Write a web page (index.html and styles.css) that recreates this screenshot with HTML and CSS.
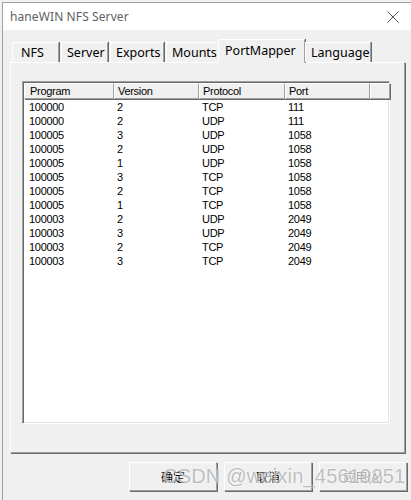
FILE: index.html
```html
<!DOCTYPE html>
<html>
<head>
<meta charset="utf-8">
<link rel="stylesheet" href="styles.css">
</head>
<body>
<div class="window">
  <div class="titlebar">
    <span class="title">haneWIN NFS Server</span>
    <svg class="close" width="12" height="12" viewBox="0 0 12 12"><path d="M0.5 0.5 L11.5 11.5 M11.5 0.5 L0.5 11.5" stroke="#555" stroke-width="1" fill="none"/></svg>
  </div>
  <div class="content">
    <div class="tabs">
      <div class="tab t-nfs">NFS</div>
      <div class="tab t-server">Server</div>
      <div class="tab t-exports">Exports</div>
      <div class="tab t-mounts">Mounts</div>
      <div class="tab active t-pm">PortMapper</div>
      <div class="tab t-lang">Language</div>
    </div>
    <div class="panel">
      <div class="listview">
        <div class="header">
          <div class="hcell c1">Program</div>
          <div class="hcell c2">Version</div>
          <div class="hcell c3">Protocol</div>
          <div class="hcell c4">Port</div>
          <div class="hcell c5"></div>
        </div>
        <div class="rows">
          <div class="row"><span class="c1">100000</span><span class="c2">2</span><span class="c3">TCP</span><span class="c4">111</span></div>
          <div class="row"><span class="c1">100000</span><span class="c2">2</span><span class="c3">UDP</span><span class="c4">111</span></div>
          <div class="row"><span class="c1">100005</span><span class="c2">3</span><span class="c3">UDP</span><span class="c4">1058</span></div>
          <div class="row"><span class="c1">100005</span><span class="c2">2</span><span class="c3">UDP</span><span class="c4">1058</span></div>
          <div class="row"><span class="c1">100005</span><span class="c2">1</span><span class="c3">UDP</span><span class="c4">1058</span></div>
          <div class="row"><span class="c1">100005</span><span class="c2">3</span><span class="c3">TCP</span><span class="c4">1058</span></div>
          <div class="row"><span class="c1">100005</span><span class="c2">2</span><span class="c3">TCP</span><span class="c4">1058</span></div>
          <div class="row"><span class="c1">100005</span><span class="c2">1</span><span class="c3">TCP</span><span class="c4">1058</span></div>
          <div class="row"><span class="c1">100003</span><span class="c2">2</span><span class="c3">UDP</span><span class="c4">2049</span></div>
          <div class="row"><span class="c1">100003</span><span class="c2">3</span><span class="c3">UDP</span><span class="c4">2049</span></div>
          <div class="row"><span class="c1">100003</span><span class="c2">2</span><span class="c3">TCP</span><span class="c4">2049</span></div>
          <div class="row"><span class="c1">100003</span><span class="c2">3</span><span class="c3">TCP</span><span class="c4">2049</span></div>
        </div>
      </div>
    </div>
    <div class="buttons">
      <div class="btn">确定</div>
      <div class="btn">取消</div>
      <div class="btn disabled">应用(A)</div>
    </div>
  </div>
  <div class="watermark">CSDN @weixin_45619251</div>
</div>
</body>
</html>
```
FILE: styles.css
```css
html, body {
  margin: 0;
  padding: 0;
  background: #f0f0f0;
}
body {
  width: 411px;
  height: 500px;
  overflow: hidden;
  position: relative;
}
.window {
  position: relative;
  margin: 2px 0 0 2px;
  width: 409px;
  height: 498px;
  border-top: 1px solid #a0a0a0;
  border-left: 1px solid #a0a0a0;
  box-sizing: border-box;
  background: #f0f0f0;
  overflow: hidden;
}
.titlebar {
  height: 27px;
  background: #ffffff;
  display: flex;
  align-items: center;
  justify-content: space-between;
  padding: 0 12px 0 7px;
}
.title {
  font-family: "Noto Sans", "Noto Sans CJK SC", sans-serif;
  font-size: 12px;
  color: #5f5f5f;
  letter-spacing: 0.1px;
}
.close {
  display: block;
}
.content {
  padding: 8px 0 0 7px;
}
.tabs {
  display: flex;
  align-items: flex-end;
  height: 24px;
  padding-left: 2px;
  position: relative;
  z-index: 2;
}
.tab {
  height: 20px;
  box-sizing: border-box;
  border-top: 1px solid #ffffff;
  border-left: 1px solid #ffffff;
  border-right: 1px solid #a0a0a0;
  box-shadow: 1px 0 0 #696969;
  margin-right: 2px;
  font-family: "Noto Sans", sans-serif;
  font-size: 12.5px;
  color: #000;
  line-height: 19px;
  padding: 0 5px;
  background: #f0f0f0;
}
.t-nfs { width: 47px; padding-left: 8px; }
.t-server { width: 47px; }
.t-exports { width: 54px; }
.t-mounts { width: 53px; margin-right: 0; }
.tab.active {
  height: 24px;
  width: 87px;
  margin-left: -1px;
  margin-right: 0;
  padding-left: 6px;
  line-height: 21px;
  border-bottom: 1px solid #f0f0f0;
  margin-bottom: -1px;
}
.t-lang { width: 66px; }
.panel {
  width: 395px;
  height: 391px;
  box-sizing: border-box;
  border-top: 1px solid #ffffff;
  border-left: 1px solid #ffffff;
  border-right: 1px solid #a0a0a0;
  border-bottom: 1px solid #a0a0a0;
  box-shadow: 1px 1px 0 #696969;
  padding: 18px 14px 0 11px;
  position: relative;
  z-index: 1;
}
.listview {
  width: 368px;
  height: 343px;
  box-sizing: border-box;
  border-top: 1px solid #a0a0a0;
  border-left: 1px solid #a0a0a0;
  border-right: 1px solid #ffffff;
  border-bottom: 1px solid #ffffff;
  box-shadow: inset 1px 1px 0 #696969, inset -1px -1px 0 #e3e3e3;
  background: #ffffff;
  padding: 1px 0 0 1px;
  font-family: "Liberation Sans", Arial, sans-serif;
  font-size: 11px;
  letter-spacing: -0.3px;
  color: #000;
}
.header {
  display: grid;
  grid-template-columns: 90px 85px 86px 85px 20px;
  height: 16px;
}
.hcell {
  box-sizing: border-box;
  height: 16px;
  background: #f0f0f0;
  border-top: 1px solid #ffffff;
  border-left: 1px solid #ffffff;
  border-right: 1px solid #a0a0a0;
  border-bottom: 1px solid #a0a0a0;
  box-shadow: 1px 1px 0 #696969;
  line-height: 14px;
  padding-left: 5px;
}
.hcell.c2, .hcell.c3, .hcell.c4 { padding-left: 3px; }
.rows {
  margin-top: 1px;
}
.row {
  display: grid;
  grid-template-columns: 90px 85px 86px 85px;
  height: 14px;
  line-height: 14px;
}
.row span { padding-left: 5px; }
.row .c2, .row .c3, .row .c4 { padding-left: 3px; }
.buttons {
  display: flex;
  gap: 7px;
  padding: 9px 0 0 119px;
}
.btn {
  width: 88px;
  height: 29px;
  box-sizing: border-box;
  border-top: 1px solid #ffffff;
  border-left: 1px solid #ffffff;
  border-right: 1px solid #a0a0a0;
  border-bottom: 1px solid #a0a0a0;
  box-shadow: 1px 1px 0 #696969;
  font-family: "Noto Sans CJK SC", "Noto Sans", sans-serif;
  font-size: 12px;
  display: flex;
  align-items: center;
  justify-content: center;
  color: #000;
}
.btn.disabled {
  color: #a0a0a0;
}
.watermark {
  position: absolute;
  left: 160px;
  top: 462px;
  font-family: "Liberation Sans", Arial, sans-serif;
  font-size: 20px;
  color: rgba(150, 150, 150, 0.6);
  text-shadow: 0 0 2px #ffffff;
  white-space: nowrap;
  letter-spacing: 0.2px;
}
```
